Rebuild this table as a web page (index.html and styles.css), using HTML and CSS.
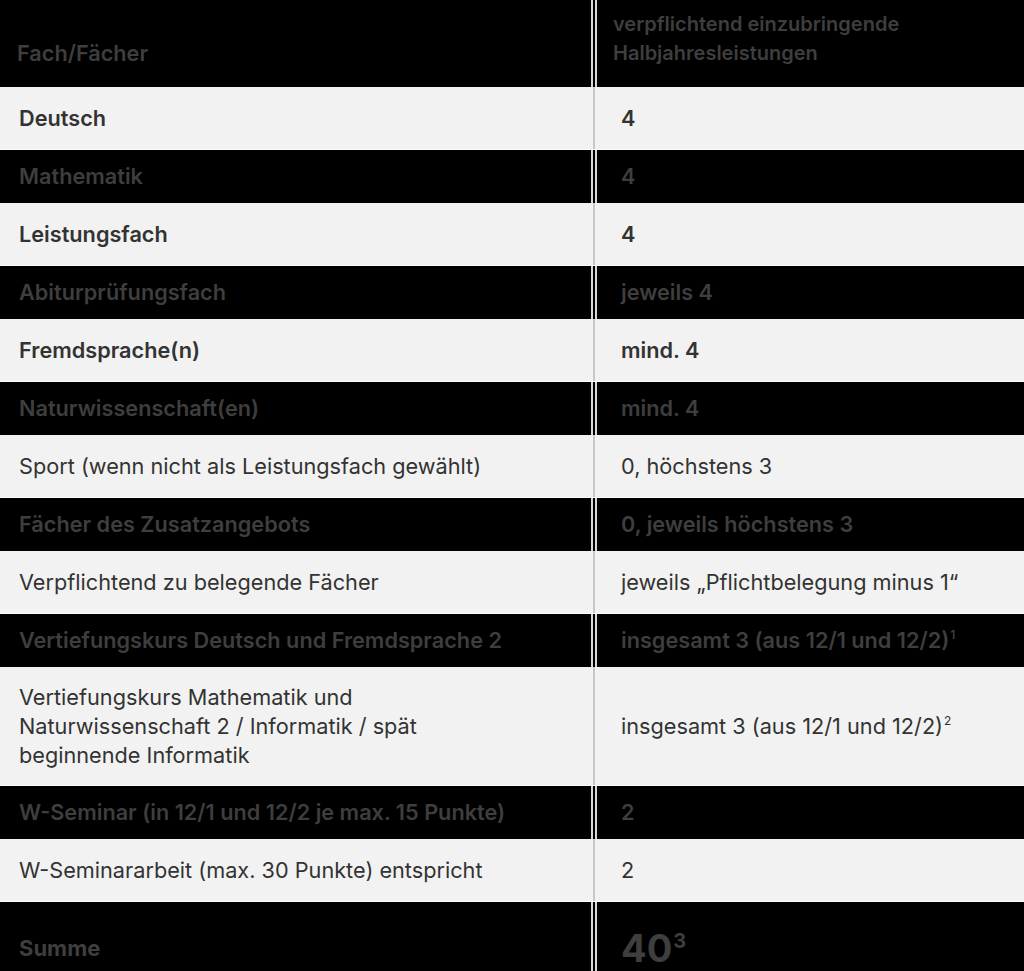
FILE: index.html
```html
<!DOCTYPE html>
<html lang="de">
<head>
<meta charset="utf-8">
<title>Halbjahresleistungen</title>
<link rel="stylesheet" href="styles.css">
</head>
<body>
<div class="table">
  <div class="row dark head">
    <div class="cell a">Fach/Fächer</div>
    <div class="cell b">verpflichtend einzubringende Halbjahresleistungen</div>
  </div>
  <div class="row light strong">
    <div class="cell a">Deutsch</div>
    <div class="cell b">4</div>
  </div>
  <div class="row dark">
    <div class="cell a">Mathematik</div>
    <div class="cell b">4</div>
  </div>
  <div class="row light strong">
    <div class="cell a">Leistungsfach</div>
    <div class="cell b">4</div>
  </div>
  <div class="row dark">
    <div class="cell a">Abiturprüfungsfach</div>
    <div class="cell b">jeweils 4</div>
  </div>
  <div class="row light strong">
    <div class="cell a">Fremdsprache(n)</div>
    <div class="cell b">mind. 4</div>
  </div>
  <div class="row dark">
    <div class="cell a">Naturwissenschaft(en)</div>
    <div class="cell b">mind. 4</div>
  </div>
  <div class="row light">
    <div class="cell a">Sport (wenn nicht als Leistungsfach gewählt)</div>
    <div class="cell b">0, höchstens 3</div>
  </div>
  <div class="row dark">
    <div class="cell a">Fächer des Zusatzangebots</div>
    <div class="cell b">0, jeweils höchstens 3</div>
  </div>
  <div class="row light">
    <div class="cell a">Verpflichtend zu belegende Fächer</div>
    <div class="cell b">jeweils „Pflichtbelegung minus 1“</div>
  </div>
  <div class="row dark">
    <div class="cell a">Vertiefungskurs Deutsch und Fremdsprache 2</div>
    <div class="cell b"><span>insgesamt 3 (aus 12/1 und 12/2)<sup>1</sup></span></div>
  </div>
  <div class="row light tall">
    <div class="cell a narrow">Vertiefungskurs Mathematik und Naturwissenschaft 2 / Informatik / spät beginnende Informatik</div>
    <div class="cell b"><span>insgesamt 3 (aus 12/1 und 12/2)<sup>2</sup></span></div>
  </div>
  <div class="row dark">
    <div class="cell a">W-Seminar (in 12/1 und 12/2 je max. 15 Punkte)</div>
    <div class="cell b">2</div>
  </div>
  <div class="row light">
    <div class="cell a">W-Seminararbeit (max. 30 Punkte) entspricht</div>
    <div class="cell b">2</div>
  </div>
  <div class="row dark sum">
    <div class="cell a">Summe</div>
    <div class="cell b"><span>40<sup>3</sup></span></div>
  </div>
</div>
</body>
</html>
```

FILE: styles.css
```css
html, body {
  margin: 0;
  padding: 0;
  background: #000;
}

body {
  font-family: Inter, "Noto Sans", "Liberation Sans", sans-serif;
  font-size: 21.7px;
  line-height: 29px;
  color: #333;
}

.table {
  width: 1024px;
}

.row {
  display: grid;
  grid-template-columns: 597px 1fr;
  align-items: stretch;
}

.cell {
  box-sizing: border-box;
  display: flex;
  align-items: center;
}

.cell.a {
  padding-left: 19px;
  padding-right: 20px;
}

.cell.b {
  padding-left: 24px;
  padding-right: 20px;
}

.cell.narrow {
  padding-right: 150px;
}

.light {
  background: #f2f2f2;
  border-bottom: 1px solid #fbfbfb;
}

.light .cell {
  padding-top: 17px;
  padding-bottom: 16px;
}

.light .cell.a {
  box-shadow: inset -2px 0 #f2f2f2, inset -4px 0 #c8c8c8;
}

.strong .cell {
  font-weight: 600;
}

.tall .cell {
  padding-top: 16px;
  padding-bottom: 15px;
}

.dark {
  background: #000;
  color: #3e3e3e;
  font-weight: 600;
}

.dark .cell {
  padding-top: 12px;
  padding-bottom: 12px;
}

.dark .cell.a {
  border-right: 6px double #d8d8d8;
}

.head .cell {
  align-items: flex-end;
  padding-top: 10px;
  padding-bottom: 19px;
}

.head .cell.a {
  padding-left: 17px;
}

.head .cell.b {
  padding-left: 16px;
  padding-right: 30px;
  font-size: 20px;
}

sup {
  font-size: 12px;
  line-height: 0;
  vertical-align: 9px;
  margin-left: 1px;
}

.sum .cell {
  padding-top: 26px;
  padding-bottom: 4px;
  align-items: center;
}

.sum .cell.a {
  font-size: 22px;
  line-height: 40px;
  font-weight: 700;
}

.sum .cell.b {
  font-size: 38px;
  line-height: 40px;
  font-weight: 700;
}

.sum sup {
  font-size: 20px;
  vertical-align: 14px;
  margin-left: 1px;
}
```
